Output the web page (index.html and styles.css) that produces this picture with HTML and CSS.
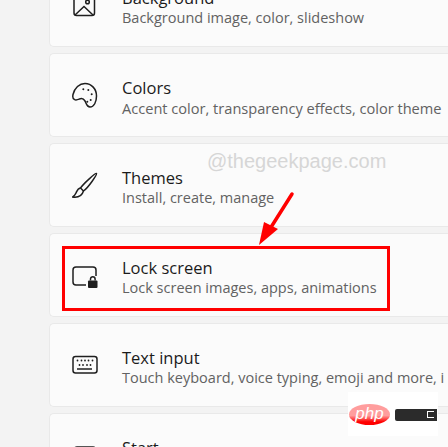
FILE: index.html
```html
<!DOCTYPE html>
<html lang="en">
<head>
  <meta charset="UTF-8">
  <title>Personalization</title>
  <link rel="stylesheet" href="styles.css">
</head>
<body>
  <div class="list">
    <div class="card">
      <svg class="icon" viewBox="0 0 26 26"><rect x="2" y="-2" width="20.500" height="25.500" rx="2.500"/><path d="M3 23l9-8.500 9 8.500"/><circle cx="15.500" cy="10" r="1.800"/></svg>
      <div class="text">
        <div class="title">Background</div>
        <div class="sub">Background image, color, slideshow</div>
      </div>
    </div>
    <div class="card">
      <svg class="icon" viewBox="0 0 26 26"><path d="M13 1.500c6.500 0 11.500 5.500 11.500 12.500 0 6-2.500 11-6.500 11-3.500 0-3.500-3.500-5-6-1.500-2.500-3-3-5.500-2-2 .8-3.500 1.500-5 .5C1 17 .5 15 1 12.500 2.500 6 7.500 1.500 13 1.500z"/><g class="dots"><circle cx="11.300" cy="7.300" r="1"/><circle cx="16.300" cy="8" r="1"/><circle cx="19.700" cy="12.300" r="1"/><circle cx="18.700" cy="18" r="1"/><circle cx="15.300" cy="19.700" r="1"/></g></svg>
      <div class="text">
        <div class="title">Colors</div>
        <div class="sub sub-wide">Accent color, transparency effects, color theme</div>
      </div>
    </div>
    <div class="card">
      <svg class="icon" viewBox="0 0 26 26"><path d="M24.500 1.500c.8.800-8 14-13 17.500l-3-3c3.500-5 15.200-15.300 16-14.500z"/><path d="M8.500 16c-3 .5-3.500 3-4.500 5-.5 1.200-2 3-3.500 4 3.500.5 9 .5 11-6"/></svg>
      <div class="text">
        <div class="title">Themes</div>
        <div class="sub">Install, create, manage</div>
      </div>
    </div>
    <div class="card">
      <svg class="icon" viewBox="0 0 26 26"><path d="M14 23H4a3 3 0 0 1-3-3V8a3 3 0 0 1 3-3h17a3 3 0 0 1 3 3v6"/><rect class="solid" x="16" y="18.500" width="9.500" height="7.500" rx="1"/><path d="M18.500 18.500v-1.500a2.300 2.300 0 0 1 4.600 0v1.500"/></svg>
      <div class="text">
        <div class="title">Lock screen</div>
        <div class="sub">Lock screen images, apps, animations</div>
      </div>
    </div>
    <div class="card">
      <svg class="icon" viewBox="0 0 26 26"><rect x="1" y="4.500" width="24" height="16.500" rx="2.500"/><path d="M5 17h15"/><g class="dots"><circle cx="5.500" cy="8.500" r=".9"/><circle cx="9.500" cy="8.500" r=".9"/><circle cx="13" cy="8.500" r=".9"/><circle cx="16.500" cy="8.500" r=".9"/><circle cx="20.500" cy="8.500" r=".9"/><circle cx="7.500" cy="13" r=".9"/><circle cx="11" cy="13" r=".9"/><circle cx="15" cy="13" r=".9"/><circle cx="18.500" cy="13" r=".9"/></g></svg>
      <div class="text">
        <div class="title">Text input</div>
        <div class="sub">Touch keyboard, voice typing, emoji and more, i</div>
      </div>
    </div>
    <div class="card">
      <svg class="icon" viewBox="0 0 26 26"><rect x="2.500" y="5" width="21" height="20" rx="2.500"/></svg>
      <div class="text">
        <div class="title">Start</div>
        <div class="sub">&nbsp;</div>
      </div>
    </div>
  </div>

  <div class="watermark">@thegeekpage.com</div>
  <div class="highlight"></div>
  <svg class="arrow" viewBox="0 0 448 447"><path class="arrow-line" d="M292 194L268 232"/><path class="arrow-head" d="M259 245L264 222L278 229z"/></svg>

  <div class="php-badge">
    <div class="php-logo">php</div>
    <div class="php-bar"><span class="php-play"></span></div>
  </div>
</body>
</html>
```

FILE: styles.css
```css
html, body {
  margin: 0;
  height: 447px;
  overflow: hidden;
}

body {
  position: relative;
  background-color: #f3f3f3;
  font-family: "Open Sans", "Noto Sans", Arial, sans-serif;
  color: #1b1b1b;
}

.list {
  display: flex;
  flex-direction: column;
  gap: 6px;
  width: 399px;
  margin-top: -37px;
  margin-left: 49px;
}

.card {
  display: flex;
  align-items: center;
  gap: 24px;
  box-sizing: border-box;
  flex: none;
  height: 84px;
  padding-left: 22px;
  background-color: #fbfbfb;
  border: 1px solid #e9e9e9;
  border-right: none;
  border-radius: 5px 0 0 5px;
  white-space: nowrap;
  overflow: hidden;
}

.icon {
  flex: none;
  width: 26px;
  height: 26px;
  fill: none;
  stroke: #1f1f1f;
  stroke-width: 1.5;
}

.icon .dots {
  fill: #1f1f1f;
  stroke: none;
}

.icon .solid {
  fill: #1f1f1f;
  stroke: none;
}

.text {
  margin-top: 5px;
}

.title {
  font-size: 16.5px;
  line-height: 20px;
}

.sub {
  font-size: 14.5px;
  line-height: 20px;
  color: #626262;
}

.sub-wide {
  font-size: 14.6px;
}

.watermark {
  position: absolute;
  left: 207px;
  top: 149px;
  font-family: "Liberation Sans", Arial, sans-serif;
  font-size: 20px;
  line-height: 24px;
  color: #d6d6d6;
}

.highlight {
  position: absolute;
  left: 62px;
  top: 246px;
  width: 322px;
  height: 59px;
  border: 3px solid #ff0000;
}

.arrow {
  position: absolute;
  left: 0;
  top: 0;
  width: 448px;
  height: 447px;
}

.arrow-line {
  stroke: #ff0000;
  stroke-width: 3.500;
  stroke-linecap: round;
  fill: none;
}

.arrow-head {
  fill: #ff0000;
}

.php-badge {
  position: absolute;
  left: 348px;
  top: 392px;
  display: flex;
  align-items: center;
  gap: 5px;
  box-sizing: border-box;
  width: 90px;
  height: 44px;
  padding-left: 1px;
  background-color: #ffffff;
}

.php-logo {
  width: 41px;
  height: 21px;
  margin-top: 1px;
  border-radius: 50%;
  background: linear-gradient(#ff9d9d 55%, #ff0000 85%);
  color: #ffffff;
  font-family: "Liberation Sans", Arial, sans-serif;
  font-size: 17px;
  font-style: italic;
  line-height: 19px;
  text-align: center;
}

.php-bar {
  display: flex;
  align-items: center;
  justify-content: flex-end;
  box-sizing: border-box;
  width: 42px;
  height: 12px;
  margin-top: 1px;
  padding-right: 3px;
  border-radius: 2px 0 0 2px;
  background-color: #2b2b2b;
}

.php-play {
  width: 6px;
  height: 5px;
  border: 1px solid #ffffff;
  border-right: none;
}
```
